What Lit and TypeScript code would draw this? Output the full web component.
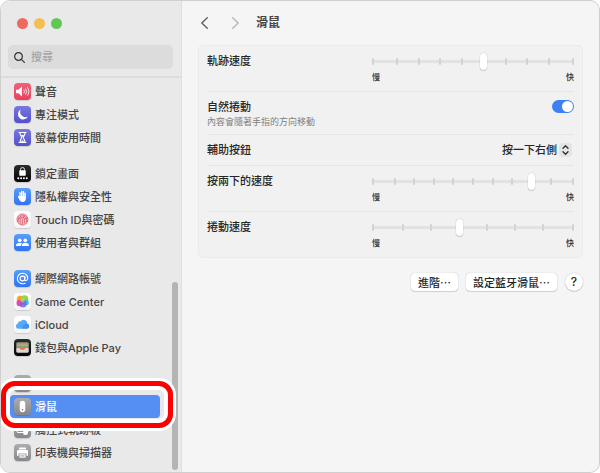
import { LitElement, html, css, svg, nothing } from "lit";
import { customElement, property } from "lit/decorators.js";
import { classMap } from "lit/directives/class-map.js";

const glyphs: Record<string, unknown> = {
  sound: svg`<path fill="#fff" d="M4 13.500h5l7-6.500v20l-7-6.500H4z"/>
    <g fill="none" stroke="#fff" stroke-width="1.700" stroke-linecap="round"><path d="M20 14q2 3 0 6"/><path d="M23.500 11.500q4 5.500 0 11"/><path d="M27 9q6 8 0 16"/></g>`,
  focus: svg`<path fill="#fff" d="M13.500 7A10.500 10.500 0 1 0 27.800 21 10.500 10.500 0 0 1 13.500 7z"/>`,
  hourglass: svg`<g fill="none" stroke="#fff" stroke-width="2.200" stroke-linecap="round" stroke-linejoin="round"><path d="M10 7h14M10 27h14"/><path d="M12 7.500c0 5 3 6.500 3.500 9.500-.5 3-3.500 4.500-3.500 9.500h10c0-5-3-6.500-3.500-9.500.5-3 3.500-4.500 3.500-9.500"/></g><path fill="#fff" d="M13.500 25.500q3.500-6 7 0zM14 12h6l-3 4z"/>`,
  lock: svg`<path fill="none" stroke="#ddd" stroke-width="2" d="M13 12V9a4 4 0 0 1 8 0v3"/><rect x="10.500" y="10.500" width="13" height="11" rx="1.500" fill="#fff"/><g fill="#fff"><circle cx="8.500" cy="26.500" r="2"/><circle cx="14.200" cy="26.500" r="2"/><circle cx="19.800" cy="26.500" r="2"/><circle cx="25.500" cy="26.500" r="2"/></g>`,
  hand: svg`<g stroke="#fff" stroke-width="2.800" stroke-linecap="round" fill="none"><path d="M12 18V9.500M15.500 17V7M19 17V7.500M22.300 18v-7.500M9 17.500l3.500 5"/></g><path fill="#fff" d="M10.700 16h13v5c0 4-2.500 7-6.500 7-3 0-5-1.500-6-4z"/>`,
  touch: svg`<circle cx="17" cy="17" r="11.500" fill="#f6c3ca"/><g fill="none" stroke="#dd5a6e" stroke-width="1.700" stroke-linecap="round"><circle cx="17" cy="17" r="11" stroke-dasharray="12 2"/><path d="M9.500 21c-2.500-7 2-11.500 7.500-11.500S26 13 25 21"/><path d="M13 24.500c-2.500-8 0-11.500 4-11.500s5 3 4 11"/><path d="M16.500 26c1-3 .5-6 .5-9M9 14l3 1M12 10l3 4M20 9l-1 5M25 14l-4 2"/></g>`,
  users: svg`<g fill="#fff"><circle cx="11.500" cy="12.500" r="3.700"/><circle cx="22.500" cy="12.500" r="3.700"/><path d="M4 24c0-4.500 3-6.500 7.500-6.500 2 0 3.500.5 4.500 1.500-1.500 1.500-2 3-2 5z"/><path d="M15.500 24c0-4.500 3-6.500 7-6.500s7.500 2 7.500 6.500z"/></g>`,
  at: svg`<g fill="none" stroke="#fff" stroke-width="2.200" stroke-linecap="round"><circle cx="17" cy="17" r="4.700"/><path d="M22 12.500l-.8 6c-.2 4 5.800 3.500 6.300-1.500.3-6-4.500-10.500-10.500-10.500A10.500 10.500 0 1 0 22 26.300"/></g>`,
  game: svg`<circle cx="12.500" cy="12.500" r="7" fill="#f6a52c"/><circle cx="21" cy="12" r="7.500" fill="#8fdc3c"/><circle cx="11.500" cy="20" r="6.500" fill="#f0469a"/><circle cx="23.500" cy="19" r="6" fill="#3cbcf0"/><circle cx="18" cy="22" r="7" fill="#7c62ea" opacity=".85"/><circle cx="17" cy="15" r="4" fill="#f2d13a" opacity=".6"/>`,
  cloud: svg`<path fill="#56a9f7" d="M9 25.500a5.200 5.200 0 0 1-1-10.300 4.700 4.700 0 0 1 5.300-4.500 7.500 7.500 0 0 1 13.500 5A5 5 0 0 1 26 25.500z"/><path fill="#2f86ee" opacity=".6" d="M16 25.500c2-7.500 5-10 10.800-9.800A5 5 0 0 1 26 25.500z"/>`,
  wallet: svg`<rect x="5" y="7" width="24" height="20" rx="2" fill="#d5d2c8"/><rect x="6" y="8.500" width="22" height="3" fill="#76908c"/><rect x="6" y="11" width="22" height="3" fill="#d0aa58"/><rect x="6" y="13.500" width="22" height="3" fill="#92a368"/><path fill="#e8705c" d="M6 16h22v3h-5l-2 3.500h-8L11 19H6z"/><path fill="#dcd9d0" d="M5 18.500h6.500l2 3h7l2-3H29V25a2 2 0 0 1-2 2H7a2 2 0 0 1-2-2z"/>`,
  keyboard: svg`<rect x="6" y="11" width="22" height="13" rx="2" fill="#fff"/>`,
  mouse: svg`<rect x="11.500" y="5.500" width="11" height="23" rx="5.500" fill="#fff"/><circle cx="17" cy="23.500" r="1.400" fill="#666"/>`,
  trackpad: svg`<rect x="6" y="9" width="22" height="14" rx="2" fill="none" stroke="#fff" stroke-width="2"/><circle cx="23" cy="23" r="5" fill="#fff"/>`,
  printer: svg`<g fill="#fff"><rect x="10" y="7" width="14" height="4" rx="1"/><path d="M8 12h18a2 2 0 0 1 2 2v8a2 2 0 0 1-2 2h-1v-5H9v5H8a2 2 0 0 1-2-2v-8a2 2 0 0 1 2-2z"/><rect x="11" y="20.500" width="12" height="7" rx="1"/></g><path stroke="#999" stroke-width="1.200" d="M13 23h8M13 25.500h8"/>`,
};

interface Item {
  label: string;
  icon: string;
  tone: string;
  selected?: boolean;
}

const groups: Item[][] = [
  [
    { label: "聲音", icon: "sound", tone: "red" },
    { label: "專注模式", icon: "focus", tone: "indigo" },
    { label: "螢幕使用時間", icon: "hourglass", tone: "indigo" },
  ],
  [
    { label: "鎖定畫面", icon: "lock", tone: "black" },
    { label: "隱私權與安全性", icon: "hand", tone: "blue" },
    { label: "Touch ID與密碼", icon: "touch", tone: "white" },
    { label: "使用者與群組", icon: "users", tone: "blue" },
  ],
  [
    { label: "網際網路帳號", icon: "at", tone: "blue" },
    { label: "Game Center", icon: "game", tone: "white" },
    { label: "iCloud", icon: "cloud", tone: "white" },
    { label: "錢包與Apple Pay", icon: "wallet", tone: "black" },
  ],
  [
    { label: "鍵盤", icon: "keyboard", tone: "gray" },
    { label: "滑鼠", icon: "mouse", tone: "gray", selected: true },
    { label: "觸控式軌跡板", icon: "trackpad", tone: "gray" },
    { label: "印表機與掃描器", icon: "printer", tone: "gray" },
  ],
];

@customElement("settings-sidebar")
export class SettingsSidebar extends LitElement {
  static styles = css`
    :host {
      display: flex;
      flex-direction: column;
      position: relative;
      background: #e9e9e9;
      border-right: 1px solid #dfdfdf;
      min-height: 0;
    }
    .lights {
      display: flex;
      gap: 6px;
      padding: 17px 16px 16px;
    }
    .light {
      width: 11px;
      height: 11px;
      padding: 0;
      border: 0;
      border-radius: 50%;
    }
    .close { background: #ed6a5f; }
    .minimize { background: #f5bf4f; }
    .zoom { background: #62c655; }
    .search {
      display: flex;
      align-items: center;
      gap: 6px;
      height: 24px;
      margin: 0 8px 7px 7px;
      padding: 0 6px;
      box-sizing: border-box;
      border-radius: 5px;
      background: #dcdcdc;
    }
    .search svg {
      width: 11px;
      height: 11px;
      flex: none;
    }
    .search input {
      flex: 1;
      min-width: 0;
      padding: 0;
      border: 0;
      outline: 0;
      background: none;
      font: inherit;
      color: #333;
    }
    .search input::placeholder { color: #a4a4a4; opacity: 1; }
    nav {
      flex: 1;
      min-height: 0;
      overflow: hidden;
      border-top: 2px solid #dcdcdc;
      padding: 2px 21px 0 9px;
    }
    ul {
      list-style: none;
      margin: 0 0 13px;
      padding: 0;
    }
    .item {
      display: flex;
      align-items: center;
      gap: 4px;
      height: 23px;
      padding-left: 4px;
      border-radius: 4px;
      color: #444;
      text-decoration: none;
      white-space: nowrap;
    }
    .selected {
      position: relative;
      z-index: 1;
      background: #568ff4;
      color: #fff;
    }
    .selected::after {
      content: "";
      position: absolute;
      inset: -14px -13px -10px -9px;
      border: 5px solid #f00;
      border-radius: 14px;
      box-shadow: 0 0 0 3px #fff, inset 0 0 0 4px #fff;
      pointer-events: none;
    }
    .tile {
      width: 17px;
      height: 17px;
      flex: none;
      border-radius: 4px;
      box-shadow: 0 1px 1px #0002;
    }
    .tile svg {
      display: block;
      width: 17px;
      height: 17px;
    }
    .red { background: linear-gradient(#f4607c, #e8405e); }
    .indigo { background: linear-gradient(#7a78e0, #5350cc); }
    .black { background: linear-gradient(#2c2c2c, #050505); }
    .blue { background: linear-gradient(#5a9df8, #2f73f3); }
    .white { background: linear-gradient(#fff, #f4f4f4); }
    .gray { background: linear-gradient(#adadb1, #87878b); }
    .scrollbar {
      position: absolute;
      right: 3px;
      bottom: 2px;
      width: 6px;
      height: 40%;
      border-radius: 3px;
      background: #b4b4b4;
    }
  `;

  render() {
    return html`
      <div class="lights">
        <button class="light close" aria-label="關閉"></button>
        <button class="light minimize" aria-label="縮到最小"></button>
        <button class="light zoom" aria-label="縮放"></button>
      </div>
      <label class="search">
        <svg viewBox="0 0 22 22" fill="none" stroke="#333" stroke-width="2.400" stroke-linecap="round" aria-hidden="true">
          <circle cx="9" cy="9" r="7.700" /><path d="M14.700 14.700L20.800 20.800" />
        </svg>
        <input type="text" placeholder="搜尋" aria-label="搜尋" />
      </label>
      <nav>
        ${groups.map(
          (group) => html`<ul>
            ${group.map(
              (item) => html`<li>
                <a
                  href="#${item.icon}"
                  class=${classMap({ item: true, selected: !!item.selected })}
                  aria-current=${item.selected ? "page" : nothing}
                >
                  <span class="tile ${item.tone}"><svg viewBox="0 0 34 34" aria-hidden="true">${glyphs[item.icon]}</svg></span>
                  <span>${item.label}</span>
                </a>
              </li>`
            )}
          </ul>`
        )}
      </nav>
      <div class="scrollbar"></div>
    `;
  }
}

@customElement("tick-slider")
export class TickSlider extends LitElement {
  @property() label = "";
  @property({ type: Number }) steps = 9;
  @property({ type: Number }) value = 0;

  static styles = css`
    :host { display: block; }
    .control {
      display: grid;
      align-items: center;
      height: 18px;
    }
    .control > * { grid-area: 1 / 1; }
    .track {
      height: 3px;
      border-radius: 1px;
      background: #e2e2e2;
    }
    .ticks {
      display: flex;
      justify-content: space-between;
    }
    .tick {
      width: 2px;
      height: 7px;
      border-radius: 1px;
      background: #d2d2d2;
    }
    .tick:first-child { margin-right: 2px; }
    .tick:last-child { margin-left: 2px; }
    input {
      appearance: none;
      width: 100%;
      height: 18px;
      margin: 0;
      background: none;
    }
    input::-webkit-slider-thumb {
      appearance: none;
      width: 7px;
      height: 17px;
      border-radius: 4px;
      background: #fff;
      box-shadow: 0 0 1px #0005, 0 1px 1px #0002;
    }
    .ends {
      display: flex;
      justify-content: space-between;
      font-size: 8px;
      line-height: 14px;
    }
  `;

  render() {
    return html`
      <div class="control">
        <div class="track"></div>
        <div class="ticks">
          ${Array.from({ length: this.steps + 1 }, () => html`<span class="tick"></span>`)}
        </div>
        <input type="range" min="0" max=${this.steps} .value=${String(this.value)} aria-label=${this.label} />
      </div>
      <div class="ends"><span>慢</span><span>快</span></div>
    `;
  }
}

@customElement("app-root")
export class AppRoot extends LitElement {
  static styles = css`
    :host {
      display: block;
      height: 100vh;
      background: #fff;
      color: #262626;
      font: 500 11px/18px Inter, "Noto Sans CJK TC", sans-serif;
    }
    .window {
      display: grid;
      grid-template-columns: 181px 1fr;
      grid-template-rows: 100%;
      height: 100%;
      box-sizing: border-box;
      overflow: hidden;
      border: 1px solid #cfcfcf;
      border-radius: 10px;
      background: #f5f5f5;
    }
    main { padding: 0 16px; }
    header {
      display: flex;
      align-items: center;
      height: 44px;
      padding-left: 3px;
      box-sizing: border-box;
    }
    .nav {
      display: flex;
      width: 7px;
      margin-right: 24px;
      padding: 0;
      border: 0;
      background: none;
      color: #5c5c5c;
    }
    .nav:disabled {
      margin-right: 17px;
      color: #b4b4b4;
    }
    .nav svg { width: 7px; height: 12px; }
    h1 {
      margin: 0;
      font-size: 12px;
      line-height: 18px;
      font-weight: 700;
      color: #444;
    }
    .panel {
      padding: 0 8px;
      border: 1px solid #eaeaea;
      border-radius: 5px;
      background: #f1f1f1;
    }
    .row {
      display: flex;
      align-items: center;
      justify-content: space-between;
      border-bottom: 1px solid #e5e5e5;
      padding: 6px 0;
    }
    .row:last-child { border-bottom: 0; }
    .row.speed {
      display: grid;
      grid-template-columns: 165px 1fr;
      align-items: start;
      padding-bottom: 7px;
    }
    .note {
      display: block;
      font-size: 9px;
      font-weight: 400;
      line-height: 12px;
      color: #808080;
    }
    .switch {
      appearance: none;
      display: flex;
      align-self: flex-start;
      width: 22px;
      height: 13px;
      margin: 2px 0 0;
      padding: 1px;
      box-sizing: border-box;
      border-radius: 7px;
      background: #bbb;
    }
    .switch::before {
      content: "";
      width: 11px;
      height: 11px;
      border-radius: 50%;
      background: #fff;
    }
    .switch:checked {
      justify-content: flex-end;
      background: #3b80f6;
    }
    .picker {
      display: grid;
      align-items: center;
    }
    .picker > * { grid-area: 1 / 1; }
    .picker select {
      appearance: none;
      padding: 0 17px 0 0;
      border: 0;
      background: none;
      font: inherit;
      color: inherit;
      text-align: right;
    }
    .picker svg {
      justify-self: end;
      width: 13px;
      height: 14px;
      margin-right: 2px;
      border-radius: 4px;
      background: #e3e3e3;
      pointer-events: none;
    }
    footer {
      display: flex;
      justify-content: flex-end;
      gap: 8px;
      margin-top: 15px;
    }
    .push {
      height: 18px;
      padding: 0 7px;
      border: 0;
      border-radius: 4px;
      background: #fff;
      box-shadow: 0 0 1px #0005, 0 1px 1px #0002;
      font: 500 11px/18px "Noto Sans CJK TC", sans-serif;
      color: inherit;
    }
    .help {
      width: 18px;
      padding: 0;
      border-radius: 50%;
      font-family: Inter, sans-serif;
      font-size: 12px;
    }
  `;

  render() {
    return html`
      <div class="window" lang="zh-Hant">
        <settings-sidebar></settings-sidebar>
        <main>
          <header>
            <button class="nav" aria-label="返回">
              <svg viewBox="0 0 7 12" fill="none" stroke="currentColor" stroke-width="1.300" stroke-linecap="round" stroke-linejoin="round"><path d="M6.300.7L.8 6l5.500 5.300" /></svg>
            </button>
            <button class="nav" aria-label="前進" disabled>
              <svg viewBox="0 0 7 12" fill="none" stroke="currentColor" stroke-width="1.300" stroke-linecap="round" stroke-linejoin="round"><path d="M.7.7L6.200 6 .7 11.300" /></svg>
            </button>
            <h1>滑鼠</h1>
          </header>
          <section class="panel">
            <div class="row speed">
              <span>軌跡速度</span>
              <tick-slider label="軌跡速度" steps="9" value="5"></tick-slider>
            </div>
            <div class="row">
              <label for="natural">自然捲動<span class="note">內容會隨著手指的方向移動</span></label>
              <input id="natural" class="switch" type="checkbox" checked />
            </div>
            <div class="row">
              <label for="secondary">輔助按鈕</label>
              <div class="picker">
                <select id="secondary">
                  <option>按一下右側</option>
                </select>
                <svg viewBox="0 0 13 14" fill="none" stroke="#333" stroke-width="1.400" stroke-linecap="round" stroke-linejoin="round" aria-hidden="true"><path d="M4 5.300L6.500 2.800 9 5.300M4 8.700l2.500 2.500L9 8.700" /></svg>
              </div>
            </div>
            <div class="row speed">
              <span>按兩下的速度</span>
              <tick-slider label="按兩下的速度" steps="10" value="8"></tick-slider>
            </div>
            <div class="row speed">
              <span>捲動速度</span>
              <tick-slider label="捲動速度" steps="7" value="3"></tick-slider>
            </div>
          </section>
          <footer>
            <button class="push">進階⋯</button>
            <button class="push">設定藍牙滑鼠⋯</button>
            <button class="push help" aria-label="輔助說明">?</button>
          </footer>
        </main>
      </div>
    `;
  }
}
